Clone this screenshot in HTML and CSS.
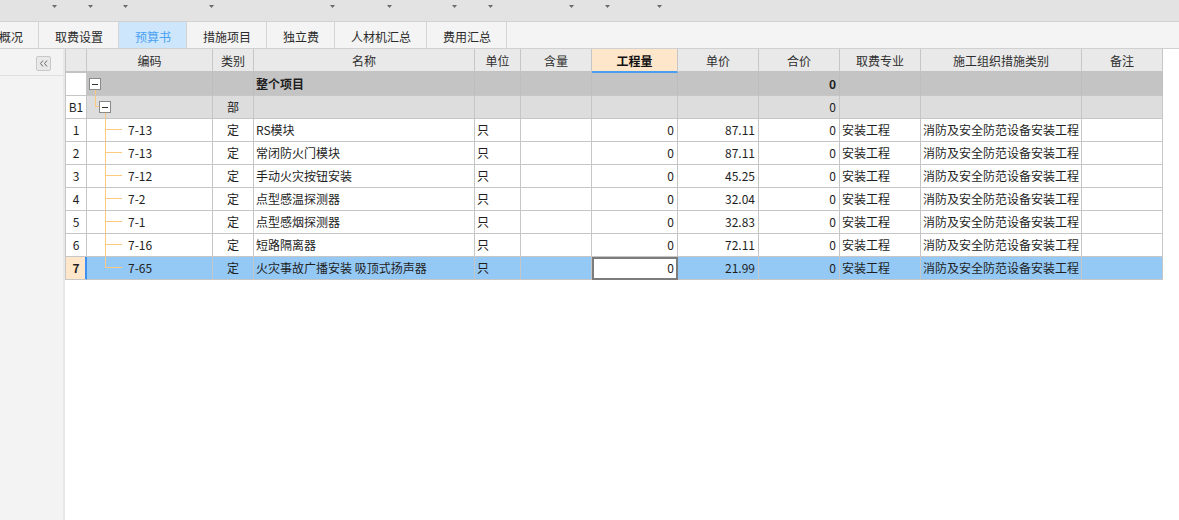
FILE: index.html
```html
<!DOCTYPE html>
<html lang="zh-CN">
<head>
<meta charset="utf-8">
<title>预算书</title>
<link rel="stylesheet" href="styles.css">
</head>
<body>
<div class="toolbar">
  <span class="tb w57"><i class="caret"></i></span>
  <span class="tb w36"><i class="caret"></i></span>
  <span class="tb w35"><i class="caret"></i></span>
  <span class="tb w86"><i class="caret"></i></span>
  <span class="tb w121"><i class="caret"></i></span>
  <span class="tb w57"><i class="caret"></i></span>
  <span class="tb w65"><i class="caret"></i></span>
  <span class="tb w36"><i class="caret"></i></span>
  <span class="tb w81"><i class="caret"></i></span>
  <span class="tb w36"><i class="caret"></i></span>
  <span class="tb w52"><i class="caret"></i></span>
</div>
<div class="tabs">
  <div class="tab first">概况</div>
  <div class="tab">取费设置</div>
  <div class="tab active">预算书</div>
  <div class="tab">措施项目</div>
  <div class="tab">独立费</div>
  <div class="tab">人材机汇总</div>
  <div class="tab">费用汇总</div>
</div>
<div class="main">
  <aside class="side">
    <div class="side-head">
      <button class="collapse" type="button">
        <svg width="13" height="13" viewBox="0 0 13 13"><polyline points="6,3.5 3.5,6.5 6,9.5" fill="none" stroke="#666" stroke-width="1"/><polyline points="10,3.5 7.5,6.5 10,9.5" fill="none" stroke="#666" stroke-width="1"/></svg>
      </button>
    </div>
  </aside>
  <div class="grid">
    <div class="row head">
      <div class="c"></div>
      <div class="c">编码</div>
      <div class="c">类别</div>
      <div class="c">名称</div>
      <div class="c">单位</div>
      <div class="c">含量</div>
      <div class="c hl">工程量</div>
      <div class="c">单价</div>
      <div class="c">合价</div>
      <div class="c">取费专业</div>
      <div class="c">施工组织措施类别</div>
      <div class="c">备注</div>
    </div>
    <div class="row root">
      <div class="c n"></div>
      <div class="c code t-root"><span class="box"></span></div>
      <div class="c"></div>
      <div class="c bold">整个项目</div>
      <div class="c"></div>
      <div class="c"></div>
      <div class="c"></div>
      <div class="c"></div>
      <div class="c num bold">0</div>
      <div class="c"></div>
      <div class="c"></div>
      <div class="c"></div>
    </div>
    <div class="row b1">
      <div class="c n">B1</div>
      <div class="c code t-b1"><span class="box"></span></div>
      <div class="c ctr">部</div>
      <div class="c"></div>
      <div class="c"></div>
      <div class="c"></div>
      <div class="c"></div>
      <div class="c"></div>
      <div class="c num">0</div>
      <div class="c"></div>
      <div class="c"></div>
      <div class="c"></div>
    </div>
    <div class="row">
      <div class="c n">1</div>
      <div class="c code t-mid">7-13</div>
      <div class="c ctr">定</div>
      <div class="c">RS模块</div>
      <div class="c">只</div>
      <div class="c"></div>
      <div class="c num">0</div>
      <div class="c num">87.11</div>
      <div class="c num">0</div>
      <div class="c">安装工程</div>
      <div class="c">消防及安全防范设备安装工程</div>
      <div class="c"></div>
    </div>
    <div class="row">
      <div class="c n">2</div>
      <div class="c code t-mid">7-13</div>
      <div class="c ctr">定</div>
      <div class="c">常闭防火门模块</div>
      <div class="c">只</div>
      <div class="c"></div>
      <div class="c num">0</div>
      <div class="c num">87.11</div>
      <div class="c num">0</div>
      <div class="c">安装工程</div>
      <div class="c">消防及安全防范设备安装工程</div>
      <div class="c"></div>
    </div>
    <div class="row">
      <div class="c n">3</div>
      <div class="c code t-mid">7-12</div>
      <div class="c ctr">定</div>
      <div class="c">手动火灾按钮安装</div>
      <div class="c">只</div>
      <div class="c"></div>
      <div class="c num">0</div>
      <div class="c num">45.25</div>
      <div class="c num">0</div>
      <div class="c">安装工程</div>
      <div class="c">消防及安全防范设备安装工程</div>
      <div class="c"></div>
    </div>
    <div class="row">
      <div class="c n">4</div>
      <div class="c code t-mid">7-2</div>
      <div class="c ctr">定</div>
      <div class="c">点型感温探测器</div>
      <div class="c">只</div>
      <div class="c"></div>
      <div class="c num">0</div>
      <div class="c num">32.04</div>
      <div class="c num">0</div>
      <div class="c">安装工程</div>
      <div class="c">消防及安全防范设备安装工程</div>
      <div class="c"></div>
    </div>
    <div class="row">
      <div class="c n">5</div>
      <div class="c code t-mid">7-1</div>
      <div class="c ctr">定</div>
      <div class="c">点型感烟探测器</div>
      <div class="c">只</div>
      <div class="c"></div>
      <div class="c num">0</div>
      <div class="c num">32.83</div>
      <div class="c num">0</div>
      <div class="c">安装工程</div>
      <div class="c">消防及安全防范设备安装工程</div>
      <div class="c"></div>
    </div>
    <div class="row">
      <div class="c n">6</div>
      <div class="c code t-mid">7-16</div>
      <div class="c ctr">定</div>
      <div class="c">短路隔离器</div>
      <div class="c">只</div>
      <div class="c"></div>
      <div class="c num">0</div>
      <div class="c num">72.11</div>
      <div class="c num">0</div>
      <div class="c">安装工程</div>
      <div class="c">消防及安全防范设备安装工程</div>
      <div class="c"></div>
    </div>
    <div class="row sel">
      <div class="c n">7</div>
      <div class="c code t-last">7-65</div>
      <div class="c ctr">定</div>
      <div class="c">火灾事故广播安装 吸顶式扬声器</div>
      <div class="c">只</div>
      <div class="c"></div>
      <div class="c num edit">0</div>
      <div class="c num">21.99</div>
      <div class="c num">0</div>
      <div class="c">安装工程</div>
      <div class="c">消防及安全防范设备安装工程</div>
      <div class="c"></div>
    </div>
  </div>
</div>
</body>
</html>
```

FILE: styles.css
```css
* { box-sizing: border-box; }

html, body {
  margin: 0;
  height: 520px;
  overflow: hidden;
}

body {
  font-family: "Noto Sans CJK SC", "Microsoft YaHei", "Liberation Sans", sans-serif;
  font-size: 12px;
  color: #1e1e1e;
  background: #fff;
}

/* top toolbar (clipped) */
.toolbar {
  height: 22px;
  background: #e3e3e3;
  border-bottom: 1px solid #d1d1d1;
  display: flex;
}
.tb {
  display: flex;
  justify-content: flex-end;
  padding-top: 5px;
  flex: none;
}
.w35 { width: 35px; }
.w36 { width: 36px; }
.w52 { width: 52px; }
.w57 { width: 57px; }
.w65 { width: 65px; }
.w81 { width: 81px; }
.w86 { width: 86px; }
.w121 { width: 121px; }
.caret {
  display: block;
  width: 5px;
  height: 3px;
  background: #6b6b6b;
  clip-path: polygon(0 0, 100% 0, 50% 100%);
}

/* tabs */
.tabs {
  height: 27px;
  background: #f4f4f4;
  border-bottom: 1px solid #d0d0d0;
  display: flex;
  overflow: hidden;
}
.tab {
  flex: none;
  display: flex;
  align-items: center;
  padding: 2px 15px 0 16px;
  border-right: 1px solid #d4d4d4;
  color: #2a2a2a;
}
.tab.first { margin-left: -17px; }
.tab.active {
  background: #cde6fb;
  color: #4aa2f3;
}

/* body area */
.main {
  display: flex;
  height: 471px;
}
.side {
  flex: none;
  width: 65px;
  background: #f3f3f3;
  border-right: 2px solid #e8e8e8;
}
.side-head {
  height: 27px;
  padding: 7px 12px 0 0;
  display: flex;
  justify-content: flex-end;
  align-items: flex-start;
  border-bottom: 1px solid #dfdfdf;
}
.collapse {
  width: 15px;
  height: 15px;
  padding: 0;
  border: 1px solid #c8c8c8;
  border-radius: 2px;
  background: #e9e9e9;
  display: flex;
  align-items: center;
  justify-content: center;
}

/* grid */
.grid {
  flex: none;
  align-self: flex-start;
  border-left: 1px solid #c6c6c6;
}
.row {
  display: grid;
  grid-template-columns: 21px 126px 41px 221px 46px 71px 86px 81px 81px 81px 161px 81px;
  height: 23px;
}
.c {
  display: flex;
  align-items: center;
  padding: 0 2px 2px;
  border-right: 1px solid #c6c6c6;
  border-bottom: 1px solid #c6c6c6;
  white-space: nowrap;
  overflow: hidden;
  background-color: #fff;
}
.head { height: 24px; }
.head .c {
  justify-content: center;
  padding: 0;
  background-color: #e9e9e9;
  border-bottom: 2px solid #c3c3c3;
  color: #2e2e2e;
}
.head .c.hl {
  background-color: #fde6c9;
  border-bottom-color: #4a9ef0;
  font-weight: bold;
  color: #111;
}

.n { justify-content: center; padding: 0 0 2px; }
.ctr { justify-content: center; }
.num { justify-content: flex-end; padding-right: 3px; }
.bold { font-weight: bold; }

.root .c { background-color: #c4c4c4; border-right-color: #bdbdbd; }
.b1 .c { background-color: #dddddd; }
.root .c.n, .b1 .c.n { background-color: #fff; border-right-color: #c6c6c6; }

.sel .c { background-color: #95c9f5; }
.sel .c.n {
  background-color: #fde6c9;
  font-weight: bold;
  border-right-color: #3d8ff2;
  box-shadow: inset -1px 0 0 #3d8ff2;
}
.sel .c.edit {
  background-color: #fff;
  outline: 2px solid #7c7c7c;
  outline-offset: -2px;
  position: relative;
  z-index: 1;
}

/* tree column */
.code {
  padding-left: 41px;
  background-repeat: no-repeat;
  color: #222;
}
.t-root, .t-b1 { padding-bottom: 0; }
.t-root {
  padding-left: 2px;
  background-image: linear-gradient(#fcc97f, #fcc97f);
  background-position: 8px 17px;
  background-size: 1px 6px;
}
.t-b1 {
  padding-left: 12px;
  background-image:
    linear-gradient(#fcc97f, #fcc97f),
    linear-gradient(#fcc97f, #fcc97f),
    linear-gradient(#fcc97f, #fcc97f);
  background-position: 8px 0, 8px 10px, 18px 17px;
  background-size: 1px 11px, 4px 1px, 1px 6px;
}
.t-mid {
  background-image:
    linear-gradient(#fcc97f, #fcc97f),
    linear-gradient(#fcc97f, #fcc97f);
  background-position: 18px 0, 18px 10px;
  background-size: 1px 100%, 17px 1px;
}
.t-last {
  background-image:
    linear-gradient(#fcc97f, #fcc97f),
    linear-gradient(#fcc97f, #fcc97f);
  background-position: 18px 0, 18px 10px;
  background-size: 1px 11px, 17px 1px;
}
.box {
  flex: none;
  width: 12px;
  height: 12px;
  border: 1px solid #8a8a8a;
  background: #fff linear-gradient(#333, #333) center / 6px 1px no-repeat;
}
```
